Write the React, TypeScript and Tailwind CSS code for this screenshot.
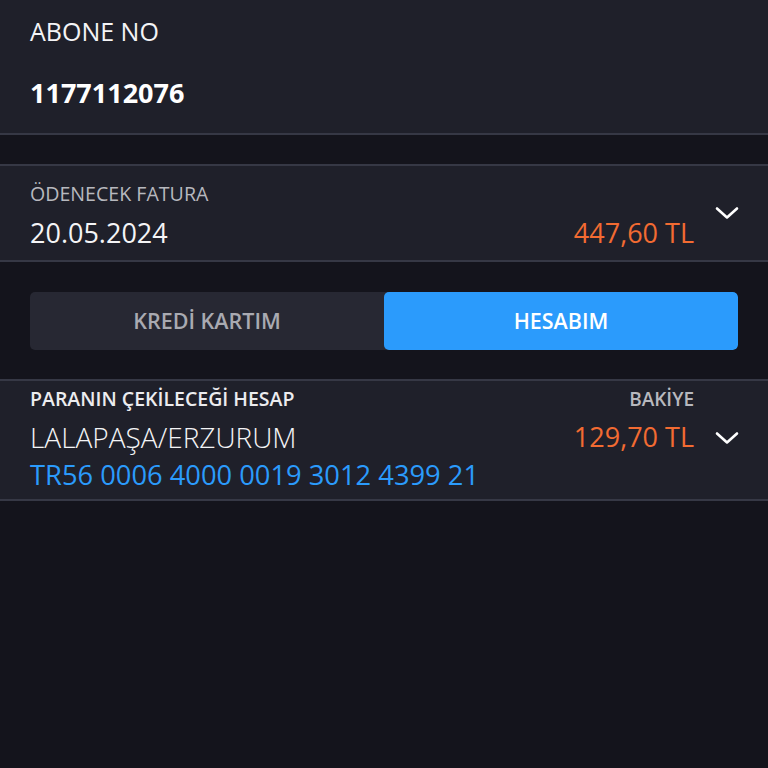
import React from "react";

const Chevron = () => (
  <svg width="24" height="14" viewBox="0 0 24 14" fill="none">
    <path d="M2 2.5 L12 11.5 L22 2.5" stroke="#ffffff" strokeWidth="2.6" strokeLinecap="round" strokeLinejoin="round" />
  </svg>
);

export default function App() {
  return (
    <div
      className="w-[768px] h-[768px] bg-[#14141c] text-white overflow-hidden"
      style={{ fontFamily: '"Open Sans", "Noto Sans", sans-serif' }}
    >
      {/* Abone No */}
      <div className="bg-[#1f202a] border-b-2 border-[#363845] px-[30px] pt-[16px] pb-[24px]">
        <div className="text-[25px] leading-[30px] text-[#f4f4f6]">ABONE NO</div>
        <div className="mt-[31px] text-[27px] leading-[32px] font-bold">1177112076</div>
      </div>

      <div className="h-[29px]" />

      {/* Ödenecek Fatura */}
      <div className="bg-[#1f202a] border-y-2 border-[#363845] pl-[30px] pr-[29px] pt-[16px] pb-[10px] flex items-start">
        <div className="flex-1">
          <div className="text-[19.6px] leading-[24px] text-[#b7b8be] font-medium">ÖDENECEK FATURA</div>
          <div className="mt-[10px] flex items-center justify-between">
            <span className="text-[27px] leading-[34px] font-medium text-[#f4f4f6]">20.05.2024</span>
            <span className="text-[27px] leading-[34px] font-medium text-[#f26b32]">447,60 TL</span>
          </div>
        </div>
        <div className="ml-[21px] mt-[24px]">
          <Chevron />
        </div>
      </div>

      {/* Toggle */}
      <div className="px-[30px] pt-[30px] pb-[29px]">
        <div className="flex h-[58px] rounded-[5px] overflow-hidden bg-[#272833]">
          <div className="flex-1 flex items-center justify-center text-[21.5px] font-semibold text-[#a9aab1]">
            KREDİ KARTIM
          </div>
          <div className="flex-1 flex items-center justify-center text-[21.5px] font-semibold text-white bg-[#2b9bfc] rounded-[5px]">
            HESABIM
          </div>
        </div>
      </div>

      {/* Hesap */}
      <div className="bg-[#1f202a] border-y-2 border-[#363845] pl-[30px] pr-[29px] pt-[5px] pb-[7px] flex items-start">
        <div className="flex-1">
          <div className="flex items-center justify-between">
            <span className="text-[19.5px] leading-[26px] font-semibold text-[#ececef]">PARANIN ÇEKİLECEĞİ HESAP</span>
            <span className="text-[19px] leading-[26px] font-semibold text-[#b7b8be]">BAKİYE</span>
          </div>
          <div className="mt-[8px] flex items-center justify-between">
            <span className="text-[28px] leading-[34px] font-light text-[#f4f4f6]">LALAPAŞA/ERZURUM</span>
            <span className="text-[27px] leading-[34px] font-medium text-[#f26b32]">129,70 TL</span>
          </div>
          <div className="mt-[4px] text-[27.3px] leading-[34px] text-[#2b9bfc]">TR56 0006 4000 0019 3012 4399 21</div>
        </div>
        <div className="ml-[21px] mt-[45px]">
          <Chevron />
        </div>
      </div>
    </div>
  );
}
